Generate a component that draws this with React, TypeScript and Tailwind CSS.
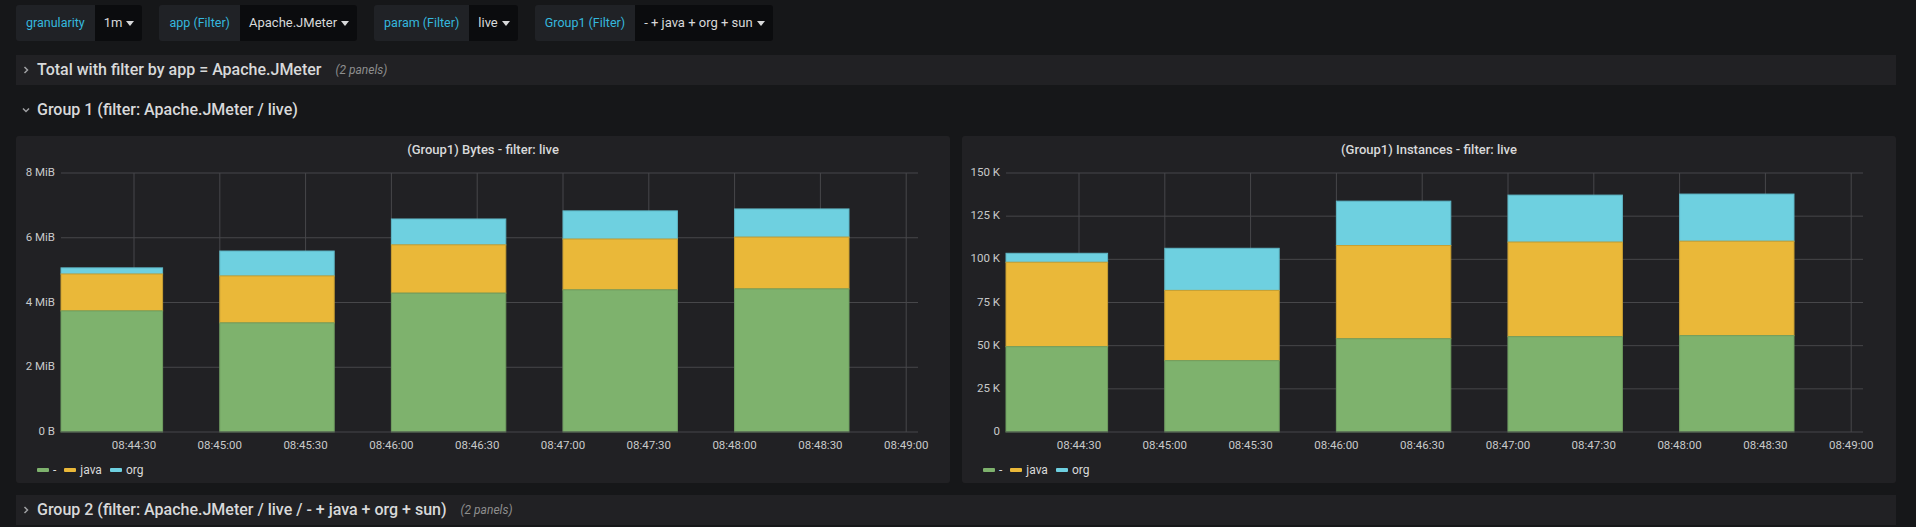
import React from "react";

const GREEN = "#7eb26d";
const YELLOW = "#eab839";
const CYAN = "#6ed0e0";

const TIMES = [
  "08:44:30",
  "08:45:00",
  "08:45:30",
  "08:46:00",
  "08:46:30",
  "08:47:00",
  "08:47:30",
  "08:48:00",
  "08:48:30",
  "08:49:00",
];

type ChartDef = {
  title: string;
  max: number;
  ticks: { v: number; label: string }[];
  plotLeft: number;
  plotRight: number;
  x0: number;
  bars: [number, number, number][]; // cumulative green, yellow, cyan
};

const bytesChart: ChartDef = {
  title: "(Group1) Bytes - filter: live",
  max: 8,
  ticks: [
    { v: 0, label: "0 B" },
    { v: 2, label: "2 MiB" },
    { v: 4, label: "4 MiB" },
    { v: 6, label: "6 MiB" },
    { v: 8, label: "8 MiB" },
  ],
  plotLeft: 45,
  plotRight: 902,
  x0: 118,
  bars: [
    [3.74, 4.88, 5.07],
    [3.37, 4.82, 5.59],
    [4.29, 5.78, 6.58],
    [4.39, 5.96, 6.83],
    [4.42, 6.02, 6.89],
  ],
};

const instChart: ChartDef = {
  title: "(Group1) Instances - filter: live",
  max: 150,
  ticks: [
    { v: 0, label: "0" },
    { v: 25, label: "25 K" },
    { v: 50, label: "50 K" },
    { v: 75, label: "75 K" },
    { v: 100, label: "100 K" },
    { v: 125, label: "125 K" },
    { v: 150, label: "150 K" },
  ],
  plotLeft: 44,
  plotRight: 901,
  x0: 117,
  bars: [
    [49.4, 98.3, 103.5],
    [41.3, 82.0, 106.4],
    [54.0, 108.0, 133.7],
    [55.2, 110.0, 137.2],
    [55.8, 110.5, 137.8],
  ],
};

const STEP = 85.8;
const PLOT_TOP = 9;
const PLOT_BOTTOM = 268;
const GRID = "#47474a";

function Chart({ def }: { def: ChartDef }) {
  const y = (v: number) => PLOT_BOTTOM - (v / def.max) * (PLOT_BOTTOM - PLOT_TOP);
  const tickX = TIMES.map((_, i) => def.x0 + i * STEP);
  return (
    <svg width="100%" height="294" viewBox="0 0 934 294" className="block">
      {def.ticks.map((t) => (
        <g key={t.label}>
          {t.v > 0 && (
            <line x1={def.plotLeft} x2={def.plotRight} y1={y(t.v)} y2={y(t.v)} stroke={GRID} strokeWidth={1} />
          )}
          <text
            x={def.plotLeft - 6}
            y={y(t.v)}
            textAnchor="end"
            dominantBaseline="middle"
            fill="#c8c9ca"
            fontSize="11.5"
            fontFamily="Roboto, sans-serif"
          >
            {t.label}
          </text>
        </g>
      ))}
      {tickX.map((x, i) => (
        <g key={i}>
          <line x1={x} x2={x} y1={PLOT_TOP} y2={PLOT_BOTTOM} stroke={GRID} strokeWidth={1} />
          <text
            x={x}
            y={282}
            textAnchor="middle"
            dominantBaseline="middle"
            fill="#c8c9ca"
            fontSize="11.5"
            fontFamily="Roboto, sans-serif"
          >
            {TIMES[i]}
          </text>
        </g>
      ))}
      {def.bars.map((b, i) => {
        const start = def.x0 + (2 * i - 1) * STEP;
        const end = start + (2 / 3) * 2 * STEP;
        const x = Math.max(start, def.plotLeft);
        const w = end - x;
        const [g, ye, c] = b;
        return (
          <g key={i}>
            <rect x={x} y={y(c)} width={w} height={y(ye) - y(c)} fill={CYAN} stroke="#5fb7c6" strokeWidth={1} />
            <rect x={x} y={y(ye)} width={w} height={y(g) - y(ye)} fill={YELLOW} stroke="#c9a032" strokeWidth={1} />
            <rect x={x} y={y(g)} width={w} height={PLOT_BOTTOM - y(g)} fill={GREEN} stroke="#6f9e60" strokeWidth={1} />
          </g>
        );
      })}
      <line x1={def.plotLeft} x2={def.plotRight} y1={PLOT_BOTTOM} y2={PLOT_BOTTOM} stroke={GRID} strokeWidth={1} />
    </svg>
  );
}

function Panel({ def }: { def: ChartDef }) {
  return (
    <div className="bg-[#212124] rounded-[3px] flex flex-col h-[347px]">
      <div className="h-[28px] flex items-center justify-center text-[13px] font-medium text-[#d8d9da]">
        {def.title}
      </div>
      <Chart def={def} />
      <div className="h-[24px] flex items-center pl-[21px] gap-2 text-[12px] text-[#d8d9da]">
        {[
          { c: GREEN, l: "-" },
          { c: YELLOW, l: "java" },
          { c: CYAN, l: "org" },
        ].map((it) => (
          <div key={it.l} className="flex items-center gap-1">
            <span className="w-3 h-[4px] rounded-[1px]" style={{ backgroundColor: it.c }} />
            <span>{it.l}</span>
          </div>
        ))}
      </div>
    </div>
  );
}

function Caret() {
  return (
    <svg width="8" height="5" viewBox="0 0 8 5" className="ml-[4px]">
      <path d="M0 0 L8 0 L4 5 Z" fill="#d8d9da" />
    </svg>
  );
}

function Variable({ label, value }: { label: string; value: string }) {
  return (
    <div className="flex h-[36px] mr-[17px]">
      <div className="flex items-center px-[10px] bg-[#202226] rounded-l-[3px] text-[#35b8de] text-[12.5px]">
        {label}
      </div>
      <div className="flex items-center pl-[9px] pr-[8px] bg-[#0b0c0e] rounded-r-[3px] text-[#d8d9da] text-[13px]">
        {value}
        <Caret />
      </div>
    </div>
  );
}

function Chevron({ down }: { down?: boolean }) {
  return (
    <svg width="8" height="8" viewBox="0 0 8 8" className="shrink-0">
      {down ? (
        <path d="M1 2.5 L4 5.5 L7 2.5" stroke="#9fa0a3" strokeWidth="1.5" fill="none" />
      ) : (
        <path d="M2.5 1 L5.5 4 L2.5 7" stroke="#9fa0a3" strokeWidth="1.5" fill="none" />
      )}
    </svg>
  );
}

function Row({ title, panels, down, bg }: { title: string; panels?: string; down?: boolean; bg?: boolean }) {
  return (
    <div className={`h-[30px] flex items-center pl-[6px] gap-[7px] ${bg ? "bg-[#212124]" : ""}`}>
      <Chevron down={down} />
      <span className="text-[16px] font-medium text-[#d8d9da]">{title}</span>
      {panels && <span className="ml-[7px] text-[12px] italic text-[#8e8e8e]">{panels}</span>}
    </div>
  );
}

export default function App() {
  return (
    <div className="min-h-screen bg-[#161719] font-['Roboto',sans-serif] pl-4 pr-5 pt-[5px] overflow-hidden">
      <div className="flex">
        <Variable label="granularity" value="1m" />
        <Variable label="app (Filter)" value="Apache.JMeter" />
        <Variable label="param (Filter)" value="live" />
        <Variable label="Group1 (Filter)" value="- + java + org + sun" />
      </div>
      <div className="mt-[14px]">
        <Row title="Total with filter by app = Apache.JMeter" panels="(2 panels)" bg />
      </div>
      <div className="mt-[10px]">
        <Row title="Group 1 (filter: Apache.JMeter / live)" down />
      </div>
      <div className="mt-[11px] grid grid-cols-2 gap-3">
        <Panel def={bytesChart} />
        <Panel def={instChart} />
      </div>
      <div className="mt-[12px]">
        <Row title="Group 2 (filter: Apache.JMeter / live / - + java + org + sun)" panels="(2 panels)" bg />
      </div>
    </div>
  );
}
